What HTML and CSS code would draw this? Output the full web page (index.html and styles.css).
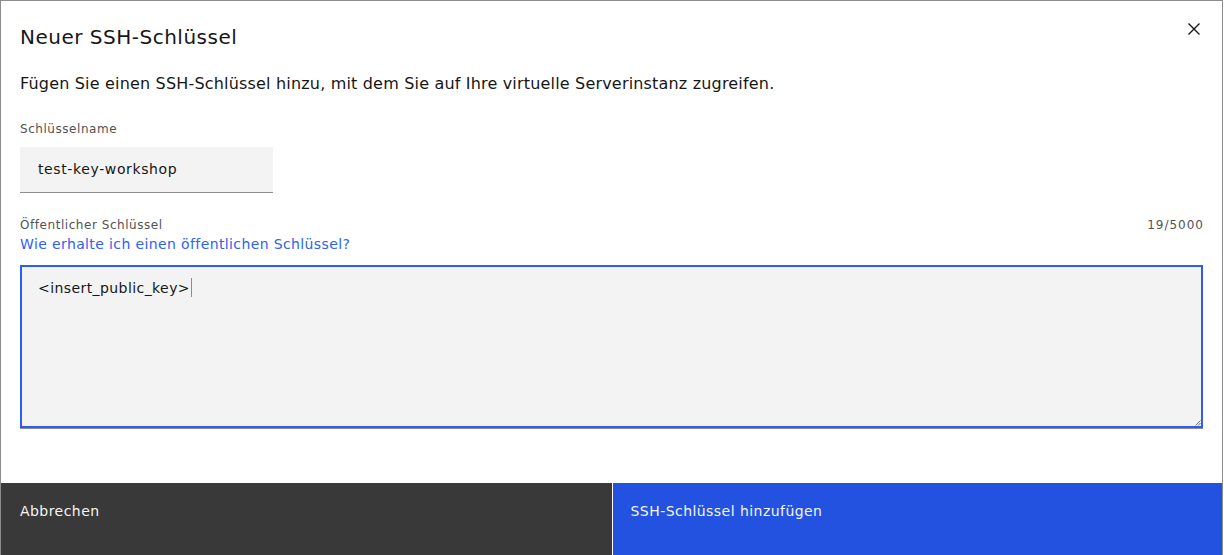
FILE: index.html
```html
<!DOCTYPE html>
<html lang="de">
<head>
<meta charset="utf-8">
<link rel="stylesheet" href="styles.css">
</head>
<body>
<div class="modal">
  <div class="body">
    <div class="header">
      <h2 class="title">Neuer SSH-Schlüssel</h2>
      <button class="close" aria-label="Schließen">
        <svg width="14" height="14" viewBox="0 0 14 14"><path d="M1.5 1.5 L12.5 12.5 M12.5 1.5 L1.5 12.5" stroke="#161616" stroke-width="1.4" fill="none"/></svg>
      </button>
    </div>
    <p class="desc">Fügen Sie einen SSH-Schlüssel hinzu, mit dem Sie auf Ihre virtuelle Serverinstanz zugreifen.</p>
    <div class="field">
      <label class="label">Schlüsselname</label>
      <div class="input">test-key-workshop</div>
    </div>
    <div class="field field-ta">
      <div class="label-row">
        <span class="label">Öffentlicher Schlüssel</span>
        <span class="label counter">19/5000</span>
      </div>
      <a class="link">Wie erhalte ich einen öffentlichen Schlüssel?</a>
      <div class="textarea"><span>&lt;insert_public_key&gt;</span><span class="caret"></span>
        <svg class="grip" width="6" height="6" viewBox="0 0 6 6"><path d="M5.5 0.5 L0.5 5.5 M5.5 3 L3 5.5" stroke="#555" stroke-width="0.8"/></svg>
      </div>
    </div>
  </div>
  <div class="footer">
    <button class="btn btn-sec">Abbrechen</button>
    <button class="btn btn-pri">SSH-Schlüssel hinzufügen</button>
  </div>
</div>
</body>
</html>
```
FILE: styles.css
```css
* { box-sizing: border-box; }
html, body { margin: 0; padding: 0; background: #fff; }
body { font-family: "DejaVu Sans", "Noto Sans", sans-serif; color: #161616; }
.modal {
  width: 1223px;
  height: 555px;
  border: 1px solid #8d8d8d;
  border-bottom: none;
  display: flex;
  flex-direction: column;
  background: #fff;
}
.body { flex: 1; padding: 0 19px; }
.header { display: flex; justify-content: space-between; align-items: flex-start; }
.title {
  margin: 22px 0 0;
  font-size: 20px;
  line-height: 28px;
  font-weight: 400;
  letter-spacing: 0.5px;
}
.close {
  border: none; background: none; padding: 0; margin: 21px 2px 0 0;
  width: 14px; height: 14px; display: block;
}
.close svg { display: block; }
.desc {
  margin: 22px 0 0;
  font-size: 16px;
  line-height: 22px;
  letter-spacing: 0.18px;
}
.field { margin-top: 26px; }
.label {
  display: block;
  font-size: 12px;
  line-height: 16px;
  color: #525252;
  letter-spacing: 0.55px;
}
.counter { letter-spacing: 1px; margin-right: -1px; }
.input {
  margin-top: 10px;
  width: 253px;
  height: 46px;
  background: #f3f3f3;
  border-bottom: 1px solid #8d8d8d;
  padding: 0 18px;
  font-size: 14px;
  line-height: 45px;
  letter-spacing: 0.62px;
}
.field-ta { margin-top: 24px; }
.label-row { display: flex; justify-content: space-between; }
.link {
  display: block;
  margin-top: 1px;
  font-size: 14px;
  line-height: 20px;
  color: #2f62f0;
  letter-spacing: 0.38px;
}
.textarea {
  position: relative;
  margin-top: 11px;
  height: 163px;
  background: #f3f3f3;
  border: 2px solid #2a5ef0;
  padding: 11px 16px;
  font-size: 14px;
  line-height: 20px;
  letter-spacing: 0.42px;
  box-shadow: 0 1px 0 #8d8d8d;
}
.caret {
  display: inline-block;
  width: 1px; height: 19px;
  background: #8d8d8d;
  vertical-align: -4px;
  margin-left: 1px;
}
.grip { position: absolute; right: 0; bottom: 0; }
.footer { display: flex; height: 72px; gap: 1px; }
.btn {
  flex: 1;
  border: none;
  margin: 0;
  text-align: left;
  padding: 18px 19px 0;
  display: flex;
  align-items: flex-start;
  font-family: inherit;
  font-size: 14px;
  line-height: 20px;
  letter-spacing: 0.45px;
  color: #f4f4f4;
}
.btn-sec { background: #393939; }
.btn-pri { background: #2352e0; padding-left: 18px; }
```
